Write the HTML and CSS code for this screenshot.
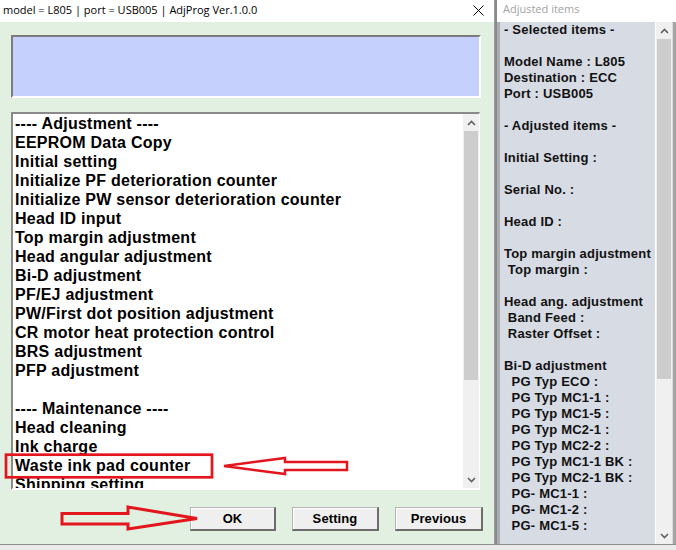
FILE: index.html
```html
<!DOCTYPE html>
<html>
<head>
<meta charset="utf-8">
<title>AdjProg</title>
<link rel="stylesheet" href="styles.css">
</head>
<body>
<div class="desk">
  <div class="win main">
    <div class="titlebar">
      <span class="title">model = L805 | port = USB005 | AdjProg Ver.1.0.0</span>
      <svg class="close" width="11" height="11" viewBox="0 0 11 11"><path d="M0.5 0.5 L10.5 10.5 M10.5 0.5 L0.5 10.5" stroke="#000" stroke-width="1" fill="none"/></svg>
    </div>
    <div class="client">
      <div class="banner"></div>
      <div class="listbox">
        <div class="list-items">
          <div class="item">---- Adjustment ----</div>
          <div class="item">EEPROM Data Copy</div>
          <div class="item">Initial setting</div>
          <div class="item">Initialize PF deterioration counter</div>
          <div class="item">Initialize PW sensor deterioration counter</div>
          <div class="item">Head ID input</div>
          <div class="item">Top margin adjustment</div>
          <div class="item">Head angular adjustment</div>
          <div class="item">Bi-D adjustment</div>
          <div class="item">PF/EJ adjustment</div>
          <div class="item">PW/First dot position adjustment</div>
          <div class="item">CR motor heat protection control</div>
          <div class="item">BRS adjustment</div>
          <div class="item">PFP adjustment</div>
          <div class="item">&nbsp;</div>
          <div class="item">---- Maintenance ----</div>
          <div class="item">Head cleaning</div>
          <div class="item">Ink charge</div>
          <div class="item">Waste ink pad counter</div>
          <div class="item">Shipping setting</div>
        </div>
        <div class="vscroll list-scroll">
          <div class="sb-btn"><svg width="9" height="6" viewBox="0 0 9 6"><path d="M1 5 L4.5 1.5 L8 5" stroke="#606060" stroke-width="1.6" fill="none"/></svg></div>
          <div class="sb-thumb list-thumb"></div>
          <div class="sb-track"></div>
          <div class="sb-btn"><svg width="9" height="6" viewBox="0 0 9 6"><path d="M1 1 L4.5 4.5 L8 1" stroke="#606060" stroke-width="1.6" fill="none"/></svg></div>
        </div>
      </div>
      <div class="buttons">
        <div class="btn btn-ok">OK</div>
        <div class="btn btn-setting">Setting</div>
        <div class="btn btn-prev">Previous</div>
      </div>
    </div>
  </div>
  <div class="win side">
    <div class="side-title">Adjusted items</div>
    <div class="side-client">
      <div class="side-text">- Selected items -

Model Name : L805
Destination : ECC
Port : USB005

- Adjusted items -

Initial Setting :

Serial No. :

Head ID :

Top margin adjustment
 Top margin :

Head ang. adjustment
 Band Feed :
 Raster Offset :

Bi-D adjustment
  PG Typ ECO :
  PG Typ MC1-1 :
  PG Typ MC1-5 :
  PG Typ MC2-1 :
  PG Typ MC2-2 :
  PG Typ MC1-1 BK :
  PG Typ MC2-1 BK :
  PG- MC1-1 :
  PG- MC1-2 :
  PG- MC1-5 :</div>
      <div class="vscroll side-scroll">
        <div class="sb-btn"><svg width="9" height="6" viewBox="0 0 9 6"><path d="M1 5 L4.5 1.5 L8 5" stroke="#606060" stroke-width="1.6" fill="none"/></svg></div>
        <div class="sb-thumb side-thumb"></div>
        <div class="sb-track"></div>
        <div class="sb-btn"><svg width="9" height="6" viewBox="0 0 9 6"><path d="M1 1 L4.5 4.5 L8 1" stroke="#606060" stroke-width="1.6" fill="none"/></svg></div>
      </div>
    </div>
  </div>
</div>
<svg class="annot" width="676" height="550" viewBox="0 0 676 550">
  <rect x="6" y="454.7" width="206" height="22.6" fill="none" stroke="#e3161e" stroke-width="2.7"/>
  <polygon points="224,466 285,458 285,462 347,462 347,470 285,470 285,474" fill="none" stroke="#e3161e" stroke-width="2.5" stroke-linejoin="miter"/>
  <polygon points="62,513.5 128,513.5 128,507 197,518.5 128,529 128,524 62,524" fill="none" stroke="#e3161e" stroke-width="3" stroke-linejoin="miter"/>
</svg>
</body>
</html>
```

FILE: styles.css
```css
html, body {
  margin: 0;
  padding: 0;
}
body {
  width: 676px;
  height: 550px;
  overflow: hidden;
  position: relative;
  background: #eaeaea;
  font-family: "Liberation Sans", Arial, sans-serif;
  color: #000;
}
.desk {
  display: flex;
  height: 550px;
}
.main {
  width: 495px;
  height: 545px;
  box-sizing: border-box;
  display: flex;
  flex-direction: column;
  border-right: 1px solid #9b9b9b;
  border-bottom: 1px solid #8f8f8f;
}
.titlebar {
  height: 22px;
  flex: none;
  background: #fff;
  display: flex;
  align-items: center;
}
.title {
  font-family: "Open Sans", "Noto Sans", sans-serif;
  font-size: 11px;
  padding-left: 3px;
  margin-top: -4px;
  color: #000;
}
.close {
  margin-left: auto;
  margin-right: 10px;
  margin-top: -1px;
}
.client {
  flex: 1;
  background: #e1f0e1;
  padding: 13px 11px 0 11px;
  display: flex;
  flex-direction: column;
}
.banner {
  height: 63px;
  flex: none;
  margin-right: 2px;
  box-sizing: border-box;
  background: #c6d0fc;
  border-top: 2px solid #7c7c7c;
  border-left: 2px solid #7c7c7c;
  border-bottom: 2px solid #fff;
  border-right: 2px solid #fff;
}
.listbox {
  margin-top: 14px;
  margin-right: 3px;
  height: 378px;
  flex: none;
  box-sizing: border-box;
  background: #fff;
  border-top: 2px solid #8a8a8a;
  border-left: 2px solid #8a8a8a;
  border-right: 1px solid #fff;
  border-bottom: 2px solid #fff;
  display: flex;
}
.list-items {
  flex: 1;
  padding-left: 2px;
  font-weight: bold;
  font-size: 16px;
  line-height: 19px;
  letter-spacing: 0.25px;
  overflow: hidden;
  white-space: nowrap;
}
.vscroll {
  width: 16px;
  flex: none;
  background: #f0f0f0;
  display: flex;
  flex-direction: column;
}
.sb-btn {
  height: 17px;
  flex: none;
  display: flex;
  align-items: center;
  justify-content: center;
}
.sb-thumb {
  flex: none;
  background: #cdcdcd;
  margin: 0 1px;
}
.list-thumb {
  height: 249px;
}
.side-thumb {
  height: 340px;
}
.sb-track {
  flex: 1;
}
.buttons {
  margin-top: 17px;
  display: flex;
  justify-content: flex-end;
  gap: 16px;
}
.btn {
  height: 24px;
  box-sizing: border-box;
  background: #efefef;
  border-top: 1px solid #b4b4b4;
  border-left: 1px solid #b4b4b4;
  border-right: 2px solid #6c6c6c;
  border-bottom: 2px solid #6c6c6c;
  box-shadow: inset 1px 1px 0 #fff;
  font-weight: bold;
  font-size: 13px;
  letter-spacing: 0.1px;
  display: flex;
  align-items: center;
  justify-content: center;
}
.btn-ok { width: 86px; }
.btn-setting { width: 87px; }
.btn-prev { width: 88px; }

.side {
  flex: 1;
  height: 545px;
  box-sizing: border-box;
  display: flex;
  flex-direction: column;
  border-left: 2px solid #8a8a8a;
  border-bottom: 1px solid #8f8f8f;
}
.side-title {
  height: 22px;
  flex: none;
  background: #fff;
  color: #a3a3a3;
  font-family: "Open Sans", "Noto Sans", sans-serif;
  font-size: 11px;
  line-height: 18px;
  padding-left: 6px;
}
.side-client {
  flex: 1;
  display: flex;
  background: #d7dbe4;
  border-left: 3px solid #a9acb2;
  border-right: 3px solid #a3a3a3;
  min-height: 0;
}
.side-text {
  width: 156px;
  flex: none;
  box-sizing: border-box;
  border-right: 1px solid #fff;
  padding-left: 4px;
  font-weight: bold;
  font-size: 13px;
  line-height: 16px;
  letter-spacing: 0.2px;
  white-space: pre;
  overflow: hidden;
  color: #111;
}
.annot {
  position: absolute;
  left: 0;
  top: 0;
  pointer-events: none;
}
```
